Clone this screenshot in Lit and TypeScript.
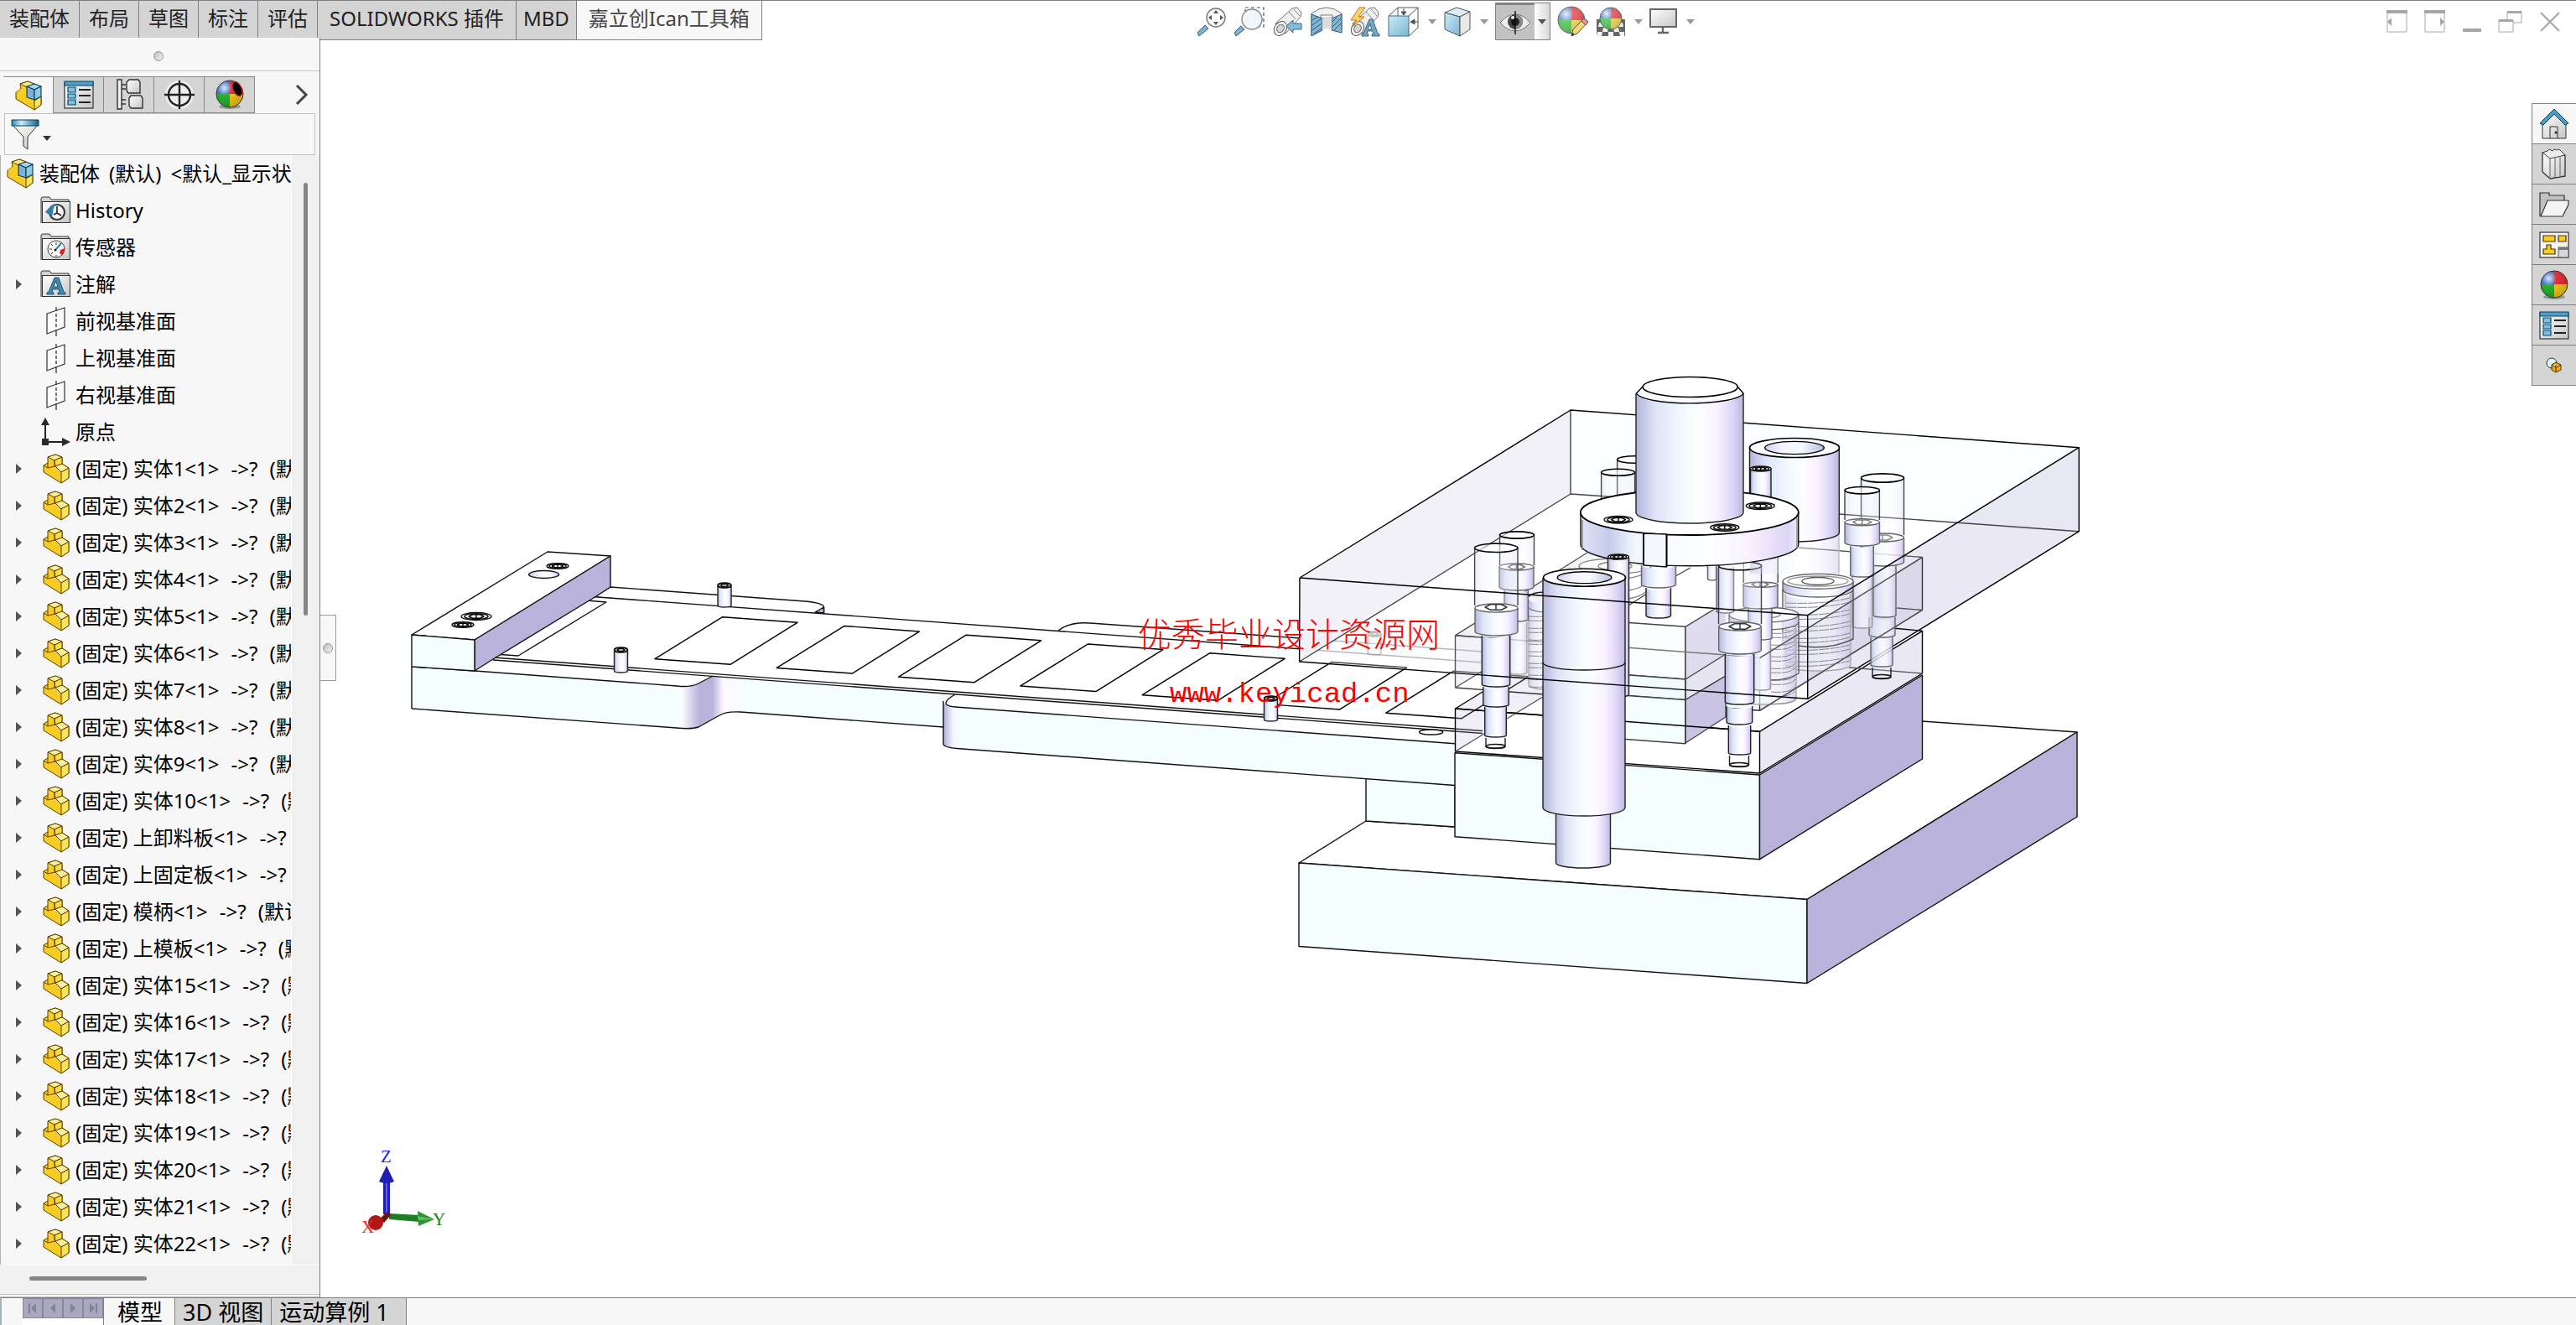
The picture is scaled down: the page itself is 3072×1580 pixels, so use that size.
import { LitElement, html, svg, css, nothing } from "lit";
import { customElement, property, state } from "lit/decorators.js";
import { classMap } from "lit/directives/class-map.js";

const FONT = css`"Noto Sans", "Noto Sans CJK SC", sans-serif`;

/* ---------- icons ---------- */

const pic = (w: number, h: number, body: unknown) =>
  html`<svg width=${w} height=${h} viewBox="0 0 ${w} ${h}" fill="none" aria-hidden="true">${body}</svg>`;

const assemblyIcon = pic(32, 36, svg`
  <g stroke="#5a4300" stroke-width="1" stroke-linejoin="round">
    <path d="M1 14 7 10 6 4 15 1 23 4 23 24 31 19 31 29 23 35 1 22z" fill="#f8cc22"/>
    <path d="M6 4 15 1 23 4 14 8z" fill="#fbe98a"/>
    <path d="M23 24 31 19 31 29 23 35z" fill="#fbe45c"/>
    <path d="M1 14 7 10 14 13 14 19z" fill="#f8cc22" stroke="none"/>
  </g>
  <g stroke="#0f4463" stroke-width="1.2" stroke-linejoin="round">
    <path d="M14 7 23 4 31 7 23 11z" fill="#a9d5ea"/>
    <path d="M14 7 23 11 23 23 14 20z" fill="#7db2d3"/>
    <path d="M23 11 31 7 31 19 23 23z" fill="#92c9e3"/>
  </g>`);

const partIcon = pic(32, 36, svg`
  <g stroke="#5a4300" stroke-width="1" stroke-linejoin="round">
    <path d="M1 14 6 11 6 4 15 1 23 4 23 12 31 17 31 29 22 35 1 22z" fill="#f8cc22"/>
    <path d="M6 4 15 1 23 4 14 8z" fill="#fbee9c"/>
    <path d="M14 8 23 4 23 12 15 15z" fill="#f9dc4e"/>
    <path d="M15 15 23 12 31 17 22 22z" fill="#fbee9c"/>
    <path d="M22 22 31 17 31 29 22 35z" fill="#fbe45c"/>
    <path d="M6 11 6 17 1 14M6 17 15 15M14 8 14 15"/>
  </g>`);

const folder = (body: unknown) => pic(37, 34, svg`
  <path d="M1 32V3Q1 1 3 1H11L13 4H34V8" fill="#d3d3d3" stroke="#333"/>
  <rect x="2.500" y="6.500" width="33" height="25" fill="url(#g-grey)" stroke="#333"/>
  ${body}`);

const historyIcon = folder(svg`
  <circle cx="20" cy="19" r="9" stroke="#3b3b3b" stroke-width="2.200" fill="#f4f4f4"/>
  <path d="M20 12V20L25 23M20 20 16 22" stroke="#222" stroke-width="1.600"/>
  <path d="M6 19 12 12Q15 9 20 9 15 12 15 20L14 24z" fill="#2f7ea8"/>`);
const sensorIcon = folder(svg`
  <circle cx="19" cy="19" r="10" fill="#f8f8f8" stroke="#444" stroke-width="1"/>
  <path d="M19 19 25 12" stroke="#2c7ba3" stroke-width="2"/>
  <path d="M24 20 29 18Q29 23 26 26L23 24z" fill="#d22"/>
  <path d="M11 19h3M13 13l2 2M19 11v3M13 25l2-2M19 28v-2" stroke="#333"/>
  <circle cx="18" cy="20" r="1.500" fill="#113"/>`);
const noteIcon = folder(svg`
  <path d="M8 29V27L10 26 17 9H22L28 26 30 27V29H21V27L23 26 22 23H15L14 26 16 27V29zM16 20H21L18.500 13z" fill="#3f88b0" stroke="#173d55" stroke-width=".8" fill-rule="evenodd"/>`);
const planeIcon = pic(37, 36, svg`
  <path d="M8 9 29 2V25L8 33z" stroke="#333" stroke-width="1.200" fill="#fbfbfb"/>
  <path d="M19 1V6M19 9v4M19 15v4M19 21v4M19 28V36" stroke="#222" stroke-width="1.200"/>`);
const originIcon = pic(37, 36, svg`
  <path d="M6 8V30H28" stroke="#222" stroke-width="2"/>
  <path d="M1 10 6 1 11 10zM26 25 36 30 26 35zM2 26h8v8H2z" fill="#2a2a2a"/>`);

const propsIcon = pic(36, 36, svg`
  <rect x="1" y="3" width="34" height="31" fill="url(#g-grey)" stroke="#333" stroke-width="1.200"/>
  <rect x="1" y="2" width="34" height="5" fill="#4fa0c8" stroke="#0d3e5c"/>
  <g fill="#7cc0e2" stroke="#0d4a6b" stroke-width="1.200"><path d="M5 9h9v6H5zM5 17h9v5H5zM5 24h9v6H5z"/></g>
  <path d="M18 12h14M18 19h14M18 27h14" stroke="#222" stroke-width="2"/>`);
const configIcon = pic(36, 38, svg`
  <path d="M4 1h5v35H4z" fill="#eee" stroke="#333" stroke-width="1.400"/>
  <path d="M9 7h5M9 12h5M9 25h5M9 30h5" stroke="#333" stroke-width="1.400"/>
  <path d="M15 4 18 1H29L31 4V17H17L15 14z" fill="url(#g-grey)" stroke="#333" stroke-width="1.400"/>
  <path d="M18 23 20 20H32L34 23V35H20L18 32z" fill="url(#g-grey)" stroke="#333" stroke-width="1.400"/>`);
const targetIcon = pic(38, 38, svg`
  <circle cx="19" cy="19" r="17" fill="#fff" opacity=".6"/>
  <circle cx="19" cy="19" r="13" stroke="#222" stroke-width="2.400"/>
  <path d="M19 2V36M1 19H37" stroke="#222" stroke-width="2.400"/>`);

const ball = (cx: number, cy: number, r: number) => svg`
  <ellipse cx=${cx} cy=${cy + r - 1} rx=${r * 0.8} ry="3" fill="#000" opacity=".3"/>
  <path d="M${cx} ${cy}V${cy - r}A${r} ${r} 0 0 0 ${cx - r} ${cy}z" fill="#2b62c4"/>
  <path d="M${cx} ${cy}V${cy - r}A${r} ${r} 0 0 1 ${cx + r} ${cy}z" fill="#d81f28"/>
  <path d="M${cx} ${cy}H${cx - r}A${r} ${r} 0 0 0 ${cx} ${cy + r}z" fill="#12a51c"/>
  <path d="M${cx} ${cy}H${cx + r}A${r} ${r} 0 0 1 ${cx} ${cy + r}z" fill="#e6bc0a"/>
  <circle cx=${cx} cy=${cy} r=${r} fill="url(#g-shine)" stroke="#333" stroke-width="1"/>`;
const ballIcon = pic(36, 38, ball(18, 18, 16));
const ballHoleIcon = pic(36, 38, svg`${ball(18, 18, 16)}
  <ellipse cx="27" cy="12" rx="5" ry="9" transform="rotate(-24 27 12)" fill="#000" stroke="#d81f28"/>`);
const filterIcon = pic(34, 38, svg`
  <path d="M2 8H32L20 22V37L15 33V22z" fill="url(#g-grey)" stroke="#333" stroke-linejoin="round"/>
  <path d="M1 2H33V9H1z" fill="url(#g-teal)" stroke="#0d3e5c"/>`);

const fitIcon = pic(36, 36, svg`
  <path d="M3 35 1 31 10 22 14 26z" fill="#79b4d1" stroke="#3a5f73"/>
  <circle cx="23" cy="13" r="11" fill="#f7fbfd" stroke="#777" stroke-width="1.400"/>
  <path d="M23 4 26 8H20zM23 22 20 18H26zM14 13 18 10V16zM32 13 28 16V10z" fill="#555"/>`);
const areaIcon = pic(38, 36, svg`
  <path d="M14 1H36V24H14z" stroke="#555" stroke-width="1.200" stroke-dasharray="4 3"/>
  <path d="M3 35 1 31 9 23 13 27z" fill="#79b4d1" stroke="#3a5f73"/>
  <circle cx="22" cy="15" r="12" fill="#eef7fc" stroke="#888" stroke-width="1.400"/>`);
const scope = svg`<path d="M4 20 24 2 30 1 35 7 34 12 16 32z" fill="#efefef" stroke="#777"/>
  <path d="M20 6 28 15M26 3 33 11" stroke="#888"/>
  <ellipse cx="10" cy="26" rx="7" ry="9" transform="rotate(35 10 26)" fill="#fafafa" stroke="#555"/>
  <ellipse cx="10" cy="26" rx="4" ry="5" transform="rotate(35 10 26)" fill="#d5d5d5" stroke="#555"/>`;
const prevIcon = pic(38, 36, svg`${scope}<path d="M17 23 25 16V20H35V27H25V31z" fill="#85bdd9" stroke="#33698a"/>`);
const sectionIcon = pic(38, 36, svg`
  <path d="M1 8Q19-6 37 8V28L26 24V10H12V26L1 34z" fill="#f2f2f2" stroke="#777"/>
  <path d="M1 9 14 14V28L1 35zM37 9 25 14V28L37 31z" fill="#7fb7d4" stroke="#33566b"/>
  <path d="M14 12H25V28Q19 24 14 28z" fill="#dcdcdc"/>
  <path d="M2 16 9 12M2 22 13 14M2 28 13 20M4 32 13 26M26 18 31 13M26 24 36 14M28 28 36 20" stroke="#33566b"/>`);
const annotViewIcon = pic(38, 36, svg`${scope}
  <path d="M12 1 2 16H9L4 24 18 12H11L19 1z" fill="#fbd766" stroke="#d1672a"/>
  <path d="M15 35V33L17 32 24 15H28L34 32 36 33V35H27V33L29 32 28 29H22L21 32 23 33V35zM22 27H27L24.500 20z" fill="#6fa9c9" stroke="#234a63" stroke-width=".8" fill-rule="evenodd"/>`);
const orientIcon = pic(38, 36, svg`
  <path d="M1 11 12 1H36V25L25 35M25 11 36 1M12 1V11" stroke="#555" fill="#fff"/>
  <path d="M1 11H25V35H1z" fill="url(#g-sky)" stroke="#3b6f8b"/>
  <path d="M19 2V7M16 6 19 10 22 6zM36 18H31M32 15 27 18 32 21z" stroke="#555" fill="#555"/>`);
const cubeIcon = pic(34, 36, svg`
  <path d="M2 7 16 1 32 6 20 12z" fill="#dbeef7" stroke="#555"/>
  <path d="M2 7 20 12V35L2 27z" fill="url(#g-sky)" stroke="#555"/>
  <path d="M20 12 32 6V27L20 35z" fill="#e8e8e8" stroke="#555"/>`);
const eyeIcon = pic(40, 36, svg`
  <path d="M2 18Q20-2 38 18 20 38 2 18z" fill="#ececec" stroke="#777"/>
  <circle cx="20" cy="17" r="9" fill="#444"/><circle cx="20" cy="17" r="5" fill="#111"/>
  <path d="M20 8A9 9 0 0 1 20 26z" fill="#8b8b8b"/><path d="M20 12A5 5 0 0 1 20 22z" fill="#222"/><circle cx="17" cy="12" r="2" fill="#eee"/>
  <path d="M20 4V32" stroke="#111" stroke-width="1.400"/>`);
const softBall = (cx: number, cy: number, r: number) => svg`
  <path d="M${cx} ${cy}V${cy - r}A${r} ${r} 0 0 0 ${cx - r} ${cy}z" fill="#6a90d6"/>
  <path d="M${cx} ${cy}V${cy - r}A${r} ${r} 0 0 1 ${cx + r} ${cy}z" fill="#e5565c"/>
  <path d="M${cx} ${cy}H${cx - r}A${r} ${r} 0 0 0 ${cx} ${cy + r}z" fill="#55c95c"/>
  <path d="M${cx} ${cy}H${cx + r}A${r} ${r} 0 0 1 ${cx} ${cy + r}z" fill="#f0d75e"/>
  <circle cx=${cx} cy=${cy} r=${r} fill="url(#g-shine)" stroke="#666"/>`;
const paintIcon = pic(38, 38, svg`${softBall(17, 17, 16)}
  <path d="M17 36 19 28 32 15 37 19 24 33z" fill="#f3d673" stroke="#555"/>
  <path d="M29 18 32 15 37 19 34 23z" fill="#e8939b" stroke="#555"/><path d="M17 36 18 32 21 34z" fill="#333"/>`);
const sceneIcon = pic(36, 38, svg`
  <path d="M1 16H35V36H1z" fill="#666"/>
  <path d="M4 20h6v5H3zM26 20h6l1 5h-6zM9 26h6l-1 5H8zM21 26h6l1 5h-6zM2 31h6l-1 5H1zM15 31h6v5h-6zM28 31h6v5h-5z" fill="#f4f4f4"/>
  ${softBall(18, 15, 13)}`);
const monitorIcon = pic(34, 32, svg`
  <rect x="1" y="1" width="31" height="21" fill="url(#g-grey)" stroke="#666" stroke-width="2"/>
  <path d="M16 22V28M10 29H23" stroke="#666" stroke-width="2.400"/>`);

const homeIcon = pic(36, 38, svg`
  <path d="M4 17 18 4 32 17V36H4z" fill="url(#g-grey)" stroke="#333"/>
  <path d="M1 18 18 1 35 18 31 20 18 7 5 20z" fill="#4b9dc6" stroke="#0d3e5c" stroke-linejoin="round"/>
  <path d="M13 36V22H22V36" stroke="#333"/><circle cx="20" cy="29" r="1.500" fill="#222"/>`);
const booksIcon = pic(32, 38, svg`
  <path d="M2 5 11 9 29 8V33L11 36 2 28z" fill="url(#g-grey)" stroke="#333" stroke-linejoin="round" stroke-width="1.300"/>
  <path d="M2 5 8 3 10 1 14 3 16 1 20 2 22 1 29 8 11 12 2 5z" fill="#ececec" stroke="#444"/>
  <path d="M11 12V36M17 11V35M23 9V34" stroke="#777" stroke-width="1.200"/>`);
const openFolderIcon = pic(38, 32, svg`
  <path d="M2 30V2H13V5H31V12" fill="#c2c2c2" stroke="#333" stroke-width="1.200"/>
  <path d="M3 30 11 11H36V16L29 30z" fill="#f4f4f4" stroke="#333" stroke-width="1.200"/>`);
const paletteIcon = pic(36, 34, svg`
  <rect x="1" y="2" width="34" height="30" fill="#f5f5f5" stroke="#333" stroke-width="1.200"/>
  <path d="M5 6H19V13H5zM23 6H32V13H23zM5 22H9V17H14V22H19V28H5z" fill="#fbcb25" stroke="#4a3500" stroke-width="1.200"/>
  <rect x="23" y="20" width="12" height="12" fill="#d8d8d8" stroke="#555"/><path d="M23 20h12v3H23z" fill="#777"/>`);
const forumIcon = pic(20, 20, svg`
  <circle cx="7" cy="7" r="6" fill="#d8f7fa" stroke="#333"/>
  <path d="M7 9 12 6 18 9V15L12 18 7 15zM7 9 12 12 18 9M12 12V18" fill="#f3a712" stroke="#4a3000"/>`);

const winIcons: [string, unknown][] = [
  ["向左停靠", pic(26, 28, svg`<path d="M1 2H24V27H1z" stroke="#a6a6a6"/><path d="M0 1H25V5H0z" fill="#a6a6a6"/><path d="M1 15 6 10V20z" fill="#a6a6a6"/>`)],
  ["向右停靠", pic(26, 28, svg`<path d="M1 2H24V27H1z" stroke="#a6a6a6"/><path d="M0 1H25V5H0z" fill="#a6a6a6"/><path d="M24 15 19 10V20z" fill="#a6a6a6"/>`)],
  ["最小化", pic(24, 28, svg`<path d="M1 23H23V27H1z" fill="#a6a6a6"/>`)],
  ["还原", pic(30, 28, svg`<path d="M11 3H28V16H11z" stroke="#a6a6a6"/><path d="M11 2H28V5H11z" fill="#a6a6a6"/><path d="M1 13H18V27H1z" fill="#fff" stroke="#a6a6a6"/><path d="M1 12H18V15H1z" fill="#a6a6a6"/>`)],
  ["关闭", pic(26, 28, svg`<path d="M2 4 24 26M24 4 2 26" stroke="#a6a6a6" stroke-width="2"/>`)],
];

const iconDefs = html`<svg class="defs" width="0" height="0" aria-hidden="true">
  <defs>
    <linearGradient id="g-grey" x2="1" y2="1"><stop stop-color="#fff"/><stop offset="1" stop-color="#c6c6c6"/></linearGradient>
    <linearGradient id="g-teal"><stop stop-color="#2a84b0"/><stop offset=".35" stop-color="#c9edfa"/><stop offset="1" stop-color="#12608a"/></linearGradient>
    <linearGradient id="g-sky" x2="1" y2="1"><stop stop-color="#c8ecf8"/><stop offset="1" stop-color="#7db5d0"/></linearGradient>
    <radialGradient id="g-shine" cx=".3" cy=".28" r=".8"><stop stop-color="#fff" stop-opacity=".85"/><stop offset=".35" stop-color="#fff" stop-opacity=".1"/><stop offset="1" stop-color="#000" stop-opacity=".15"/></radialGradient>
  </defs>
</svg>`;

/* ---------- model view ---------- */

type Pt = [number, number];
const poly = (pts: Pt[], fill: string, stroke = "none", opacity = 1) =>
  svg`<polygon points=${pts.map((p) => p.join(",")).join(" ")} fill=${fill} stroke=${stroke} fill-opacity=${opacity}/>`;

interface CylOpts { fill?: string; top?: boolean; stroke?: string; alpha?: number; bottom?: boolean }
const cyl = (x1: number, x2: number, y1: number, y2: number, ry: number, o: CylOpts = {}) => {
  const rx = (x2 - x1) / 2;
  const s = o.stroke ?? "#222";
  return svg`<g stroke=${s}>
    <path d="M${x1} ${y1}V${y2}A${rx} ${ry} 0 0 0 ${x2} ${y2}V${y1}A${rx} ${ry} 0 0 ${o.top ? 0 : 1} ${x1} ${y1}" fill=${o.fill ?? "url(#metal)"} fill-opacity=${o.alpha ?? 1} stroke="none"/>
    <path d="M${x1} ${y1}V${y2}M${x2} ${y1}V${y2}"/>
    ${o.bottom === false ? nothing : svg`<path d="M${x1} ${y2}A${rx} ${ry} 0 0 0 ${x2} ${y2}"/>`}
    ${o.top ? svg`<ellipse cx=${x1 + rx} cy=${y1} rx=${rx} ry=${ry} fill="#fff" fill-opacity=${o.alpha ?? 1}/>` : nothing}
  </g>`;
};
/** Clear clearance hole above a screw. */
const bore = (cx: number, rx: number, y1: number, y2: number) => svg`
  <path d="M${cx - rx} ${y1}V${y2}H${cx + rx}V${y1}" fill="url(#metal)" fill-opacity=".22" stroke="none"/>
  <path d="M${cx - rx} ${y1}V${y2}M${cx + rx} ${y2}V${y1}" stroke="#444"/>
  <ellipse cx=${cx} cy=${y1} rx=${rx} ry=${rx / 5} fill="#fff" fill-opacity=".5" stroke="#000" stroke-width="1.600"/>`;
const hex = (cx: number, cy: number, rx: number, s = "#333") => {
  const r = rx / 4;
  return svg`<path d="M${cx - rx} ${cy}L${cx - rx / 2} ${cy - r}H${cx + rx / 2}L${cx + rx} ${cy}L${cx + rx / 2} ${cy + r}H${cx - rx / 2}zM${cx} ${cy - r}V${cy + r}" stroke=${s} fill="#fff"/>`;
};
const socket = (cx: number, cy: number, rx: number) => svg`
  <ellipse cx=${cx} cy=${cy} rx=${rx} ry=${rx / 4} fill="#fff"/>
  <ellipse cx=${cx} cy=${cy} rx=${rx * 0.78} ry=${rx / 5.5}/>${hex(cx, cy, rx * 0.5, "#000")}`;
const pin = (cx: number, y1: number, y2: number) => svg`
  ${cyl(cx - 8, cx + 8, y1, y2, 2)}<ellipse cx=${cx} cy=${y1} rx="8" ry="3" fill="#999" stroke="#000"/><ellipse cx=${cx} cy=${y1} rx="4" ry="1.500" stroke="#000" fill="#fff"/>`;
const coils = (x1: number, x2: number, y1: number, y2: number) => {
  const out = [];
  for (let y = y1, i = 0; y < y2; y += i % 2 ? 9 : 5, i++)
    out.push(svg`<path d="M${x1} ${y + 3}Q${(x1 + x2) / 2 + 8} ${y + 5} ${x2} ${y - 3}"/>`);
  return svg`<g stroke="#888" stroke-width="1" stroke-dasharray="12 1">${out}</g>`;
};

@customElement("die-scene")
export class DieScene extends LitElement {
  static styles = css`
    :host { display: block; width: 100%; height: 100%; }
    .scene { display: block; width: 100%; height: 100%; }
    .mark-cn { font: 40px "Noto Sans CJK SC", sans-serif; font-weight: 300; fill: #f00; stroke: none; }
    .mark-url { font: 34px "Liberation Mono", monospace; fill: #f00; stroke: none; }
    .axis { font: 21px "Liberation Serif", serif; stroke: none; }
  `;

  private strip() {
    const windows = [0, 1, 2, 3, 4, 5, 6].map((i) => {
      const dx = i * 145.3, dy = i * 10.75;
      return poly([[861.7 + dx, 735.7 + dy], [951 + dx, 742.3 + dy], [871 + dx, 792.3 + dy], [781 + dx, 785.7 + dy]], "#fff", "#000");
    });
    return svg`
      <path d="M728 700 960 717Q982 719 982.500 724V733L709 712z" fill="#fff"/>
      <path d="M982.500 724V731L972 730z" fill="#b9b3dc"/>
      <path d="M1262 752Q1276 741 1300 743L1768 777V791z" fill="#fff" stroke="none"/>
      <path d="M1262 752Q1276 741 1300 743L1550 761"/><path d="M1550 761 1768 777" stroke="#999"/>
      <path d="M491 795 807 818Q824 820 833 815L850 806 1125 826V867L883 849Q866 848 858 853L833 867Q824 870 807 868L491 845z" fill="#f5feff" stroke="none"/>
      <path d="M812 819Q826 819 833 815L850 806 890 808V849Q868 847 858 853L833 867Q826 869 812 868z" fill="url(#bend)" stroke="none"/>
      <path d="M1125 867 883 849Q866 848 858 853L833 867Q824 870 807 868L491 845"/>
      <path d="M1125 838Q1126 832 1139 828L1735 872V936.500L1141 892.500Q1125 891 1125 887z" fill="#f5feff" stroke="none"/>
      <path d="M1125 838Q1130 843 1145 843V892Q1125 891 1125 887z" fill="url(#edge)" stroke="none"/>
      <path d="M1139 828Q1117 841 1139 843L1768 888V874z" fill="#fff" stroke="none"/>
      <path d="M1139 828Q1117 841 1139 843L1735 886.700M1125 836V887Q1125 891 1141 892.500L1735 936.500"/>
      <path d="M491 795 566 800 588 786 850 806 833 815Q824 820 807 818L566 800z" fill="#fff" stroke="none"/>
      <path d="M566 800 807 818Q824 820 833 815L850 806M491 795 566 800"/>
      <path d="M709 711.700 1780 791 1780 873 588 784z" fill="#fff" stroke="none"/>
      <path d="M709 711.700 1560 774.500M588 784 1768 871.500"/><path d="M588 787 1768 874.500"/><path d="M1560 774.500 1768 790" stroke="#999"/>
      ${windows}
      <path d="M699 716 723 718 618 782 590 780" fill="#fff"/>
      <polygon points="491,757 653,658 728,663 566,763" fill="#fff"/>
      <polygon points="566,763 728,663 728,700 711,711 588,786 566,800" fill="#b9b3dc"/>
      <polygon points="491,757 566,763 566,800 491,795" fill="#f5feff"/>
      <path d="M491 795V845" />
      ${socket(665, 675, 13)}
      <ellipse cx="648.600" cy="685" rx="18" ry="4.500" fill="url(#metal)"/>
      ${socket(568, 735, 18)}${socket(552, 745, 13)}
      ${pin(864, 698, 722)}${pin(740.5, 775, 800)}${pin(1515.5, 833, 858)}
      <g opacity=".4">${pin(1639, 756, 779)}</g>
      <ellipse cx="1706.600" cy="873" rx="14" ry="3" fill="#fff"/>`;
  }

  private base() {
    return svg`
      <polygon points="1549,1029 1629,979 1800,860 2292,860 2477,873 2155,1072.500" fill="#fff" stroke="none"/>
      <path d="M2292 860 2477 873 2155 1072.500 1549 1029 1629 979 1735 986"/>
      <polygon points="1549,1029 2155,1072.500 2155,1172.500 1549,1128.500" fill="#f5feff"/>
      <polygon points="2155,1072.500 2477,873 2477,974 2155,1172.500" fill="#b9b3dc"/>
      <polygon points="1629,928 1735,936 1735,986 1629,979" fill="#f5feff"/>`;
  }

  private dieBlock() {
    return svg`
      <polygon points="1735,897.700 2098.500,924 2098.500,1024.700 1735,997.700" fill="#f5feff"/>
      <polygon points="2098.500,924 2292.500,805 2292.500,905 2098.500,1024.700" fill="#b9b3dc"/>
      <polygon points="1735,895.700 1768,876 1938,840 2230,796 2292.500,803 2098.500,922" fill="#fff" stroke="none"/>`;
  }

  private plates() {
    return svg`
      ${poly([[1735.5, 845], [1768, 825], [1840, 781], [1840, 831], [1735.5, 895.7]], "#b9b3dc", "none", 0.22)}
      ${poly([[2098.5, 872.3], [2292.5, 752.3], [2292.5, 803], [2098.5, 922]], "#b9b3dc", "none", 0.3)}
      ${poly([[1735.5, 757.7], [1900, 656], [1900, 718], [1735.5, 820]], "#c4c0dc", "none", 0.2)}
      ${poly([[2098.5, 784.7], [2292.5, 664.5], [2292.5, 727.5], [2098.5, 847]], "#b9b3dc", "none", 0.3)}
      <path d="M1735.500 845V896L2098.500 922V872.300zM2098.500 872.300 2292.500 752.300V803L2098.500 922M2257 749 2292.500 752.300M1735.500 845 1768 825" stroke="#000"/>
      <path d="M1735.500 820 2098.500 847.300 2292.500 727.500V664.500L2098.500 784.700V847" stroke="#333"/>
      <path d="M1735.500 820V757.700L2098.500 784.700M2145 653 2292.500 664.500M1735.500 757.700 1893 659M2262 725 2292.500 727.500M2205 796 2292.500 803M1735.500 820 1768 800M1735.500 896 1770 875M1797 857 1840 831" stroke="#555"/>`;
  }

  private punch() {
    return svg`<g stroke="#444">
      <polygon points="1850,736 2010,747.300 2046.700,725 2016,677 1942,722" fill="#fff" stroke="none"/>
      <path d="M1942 722 1964 708M1998 687 2016 677" />
      <polygon points="1850,736 2010,747.300 2010,810 1850,798" fill="#fafeff"/>
      <polygon points="1850,798 2010,810 2010,834.500 1850,823" fill="#f1fbfd"/>
      <polygon points="1850,823 2010,834.500 2010,886.700 1850,875" fill="#f5feff"/>
      <polygon points="2010,747.300 2046.700,725 2058,724 2058,780 2010,810" fill="#dfdcef" stroke="none"/>
      <polygon points="2010,810 2058,780 2058,806 2010,834.500" fill="#e6e3f3"/>
      <polygon points="2010,834.500 2058,806 2058,855 2010,886" fill="#c9c4e3"/>
      <path d="M2010 747.300 2046.700 725M2010 747V887"/>
    </g>
    <path d="M1938 772 2058 781" stroke="#777"/>`;
  }

  private fasteners() {
    const soft = "#666";
    return svg`
      <g>${bore(2245, 25.5, 570, 638)}
        ${cyl(2219.5, 2270.5, 641, 670, 5, { top: true, stroke: soft, alpha: 0.8 })}${hex(2245, 641, 12, "#888")}
        ${cyl(2234, 2261, 674, 734, 2, { alpha: 0.6, stroke: soft })}${cyl(2229, 2260, 736, 757, 3, { alpha: 0.6, stroke: soft })}
        ${cyl(2231, 2257, 760, 793, 2, { alpha: 0.8, stroke: soft })}${cyl(2233, 2255, 796, 807, 2, { alpha: 0.2 })}<ellipse cx="2244" cy="807" rx="11" ry="2.500"/></g>
      <g>${bore(2220.7, 20.7, 584.7, 620)}
        ${cyl(2200, 2241.5, 622.7, 647, 4, { top: true, stroke: soft })}${hex(2220.7, 622.7, 11, "#777")}
        ${cyl(2206.7, 2234.3, 651, 686, 2, { stroke: soft })}${cyl(2209, 2232.7, 688, 747, 2, { alpha: 0.6, stroke: "#999" })}</g>
      <g>${cyl(2126, 2210, 693.3, 703, 9, { top: true, stroke: soft })}
        <ellipse cx="2168" cy="693" rx="36" ry="6" stroke="#999"/>
        <ellipse cx="2168" cy="693" rx="19" ry="4.500" stroke="#555"/>
        ${cyl(2129, 2207, 708, 793, 7, { alpha: 0.5, stroke: "#aaa" })}${coils(2130, 2206, 716, 795)}
        <path d="M2126 703V765M2210 703V762Q2180 776 2144 770" stroke="#555"/></g>
      <g>${cyl(2062, 2145, 733, 742, 9, { top: true, stroke: soft, alpha: 0.8 })}
        <ellipse cx="2104" cy="733" rx="19" ry="4" stroke="#888"/>
        ${cyl(2066, 2142, 748, 834, 6, { alpha: 0.6, stroke: "#aaa" })}${coils(2112, 2141, 752, 838)}
        <path d="M2145 742V803Q2132 811 2112 811" stroke="#555"/></g>
      ${cyl(2047, 2067.5, 676, 729, 2, { stroke: soft })}
      <g>${bore(2099.7, 20.5, 659.3, 695)}
        ${cyl(2079, 2120, 697.3, 723, 3, { top: true, stroke: soft })}${hex(2099, 697, 10, "#777")}
        ${cyl(2085, 2113, 726, 761, 2, { stroke: soft })}${cyl(2090, 2111.5, 763, 821, 2, { stroke: "#999", alpha: 0.8 })}</g>
      <g>${bore(2075, 25.5, 674.7, 744)}
        ${cyl(2049.7, 2100.3, 747, 775, 5, { top: true, stroke: soft })}${hex(2075, 747, 13)}
        ${cyl(2057.3, 2091.7, 780, 837, 3)}${cyl(2059, 2089.7, 842, 861, 3)}
        ${cyl(2061.3, 2087.7, 865, 898, 2)}${cyl(2062.5, 2085.5, 901, 912, 2, { alpha: 0.2 })}<ellipse cx="2074" cy="912" rx="11.500" ry="2.500"/></g>
      <g>${cyl(1822, 1860, 712, 722, 8, { stroke: soft })}${cyl(1823, 1860, 724, 816, 6, { alpha: 0.5, stroke: "#aaa" })}${coils(1823, 1860, 732, 818)}
        <path d="M1822 712Q1828 706 1842 706" /></g>
      <g>${bore(1809, 20.5, 638, 674)}
        ${cyl(1788, 1829, 676, 700, 4, { top: true, stroke: soft })}${hex(1808.5, 676, 10, "#777")}
        ${cyl(1794, 1822.3, 704, 739, 2, { stroke: soft })}${cyl(1799, 1821, 742, 802, 2, { stroke: "#aaa", alpha: 0.7 })}</g>
      <g>${bore(1784.3, 25.7, 653.3, 722)}
        ${cyl(1759, 1810, 725, 753, 5, { top: true, stroke: soft })}${hex(1784, 724, 13)}
        ${cyl(1767.3, 1800.7, 758, 816, 3)}${cyl(1768.7, 1799.3, 819, 840, 3)}
        ${cyl(1770.7, 1796.3, 843, 877, 2)}${cyl(1772, 1795, 880, 890, 2, { alpha: 0.2 })}<ellipse cx="1783.500" cy="890" rx="11.500" ry="2.500"/></g>
      <g stroke="#888"><ellipse cx="1926" cy="675" rx="43" ry="9" fill="#fafafa"/><ellipse cx="1926" cy="675" rx="20" ry="5"/>
        <path d="M1938 690Q1958 688 1966 680M1942 704Q1960 701 1964 694M1942 714Q1962 710 1964 703"/></g>
      ${cyl(2036.4, 2047, 672, 690, 2, { stroke: soft })}
      ${cyl(1957.5, 1998.5, 674, 697, 4, { stroke: soft })}${cyl(1963, 1992.5, 701, 734, 3)}`;
  }

  private pillarsAndShank() {
    const ring = (cx: number, cy: number, rx: number, ry: number) => svg`
      <ellipse cx=${cx} cy=${cy} rx=${rx} ry=${ry} fill="#fff" stroke="#000" stroke-width="1.600"/>
      <ellipse cx=${cx} cy=${cy} rx=${rx * 0.66} ry=${ry * 0.66} fill="url(#bore)" stroke="#000"/>`;
    return svg`
      ${bore(1949.6, 21, 548, 600)}${bore(1929.6, 20, 563.3, 600)}
      <path d="M2087 634V684H2193V634" fill="url(#metal)" fill-opacity=".4" stroke="none"/><path d="M2193 634V684" stroke="#bbb"/>
      ${cyl(2086.5, 2193.3, 534, 635, 11)}${ring(2140, 534, 53.5, 11.5)}
      ${cyl(2087.5, 2112, 559, 600, 3)}${socket(2099.7, 559, 12.5)}
      <path d="M1885 611V650A130 26 0 0 0 2144.700 650V611z" fill="url(#flange)"/>
      <ellipse cx="2014.800" cy="611" rx="130" ry="27" fill="#fff" stroke="#000" stroke-width="1.800"/>
      <path d="M1887 620V656M2143 618V654" stroke="#888"/>
      <path d="M1960 636V674L1987.500 676V637z" fill="#f4f8fd"/>
      <path d="M1960 636V674M1987.500 637V676" stroke="#000" stroke-width="1.800"/>
      ${socket(1930, 619.7, 17)}${socket(2056.8, 629, 17)}${socket(2099.3, 603.3, 17)}
      ${cyl(1951, 2079, 469, 611, 13)}
      <path d="M1951.500 469 1959 461H2072L2079 469A64 13 0 0 1 1951.500 469z" fill="#fafbff" stroke="#000"/>
      <ellipse cx="2015.700" cy="461.500" rx="56.500" ry="12" fill="#fff" stroke="#000" stroke-width="1.600"/>
      ${cyl(1917.5, 1942.5, 665, 828, 3)}${socket(1930, 664, 12.5)}
      ${cyl(1855.5, 1920.5, 965, 1029, 6)}
      ${cyl(1840, 1938, 689, 963, 10)}
      <path d="M1840 790A49 9 0 0 0 1938 790"/>
      ${ring(1889.5, 688.7, 49, 10.5)}`;
  }

  private triad() {
    return svg`
      <path d="M464 1447 500 1449V1457L464 1454z" fill="#1d7d22" stroke="none"/>
      <path d="M498 1444 518 1454 499 1462z" fill="#2c9434" stroke="none"/><path d="M498 1450 518 1454 499 1455z" fill="#5fbf66" stroke="none"/>
      <path d="M457 1409H465V1448H457z" fill="#1c1cc8" stroke="none"/><path d="M460 1409H462V1448H460z" fill="#5c5cf5" stroke="none"/>
      <path d="M452 1409 461 1390 470 1409Q461 1413 452 1409z" fill="#1f1fb4" stroke="none"/>
      <path d="M452 1454 462 1445 466 1449 458 1458z" fill="#6c1414" stroke="none"/>
      <ellipse cx="448" cy="1458" rx="9" ry="9" fill="#b01818" stroke="none"/>
      <text class="axis" x="454" y="1386" fill="#2222ff">Z</text>
      <text class="axis" x="516" y="1461" fill="#118811">Y</text>
      <text class="axis" x="431" y="1470" fill="#ff2020">X</text>`;
  }

  render() {
    return html`<svg class="scene" viewBox="382 45 2690 1502" preserveAspectRatio="xMidYMid meet" fill="none"
        stroke="#111" stroke-width="1.400" stroke-linejoin="round" role="img" aria-label="装配体">
      <defs>
        <linearGradient id="metal"><stop stop-color="#b3b4da"/><stop offset=".18" stop-color="#dfe3f6"/><stop offset=".45" stop-color="#f3fbff"/><stop offset=".6" stop-color="#fdfdff"/><stop offset=".76" stop-color="#f8f0ff"/><stop offset=".9" stop-color="#dcd6f6"/><stop offset="1" stop-color="#bdb7e0"/></linearGradient>
        <linearGradient id="flange"><stop stop-color="#dfe3f6"/><stop offset=".13" stop-color="#c6cbea"/><stop offset=".25" stop-color="#f2f7fd"/><stop offset=".6" stop-color="#fdfeff"/><stop offset=".78" stop-color="#f8f0ff"/><stop offset=".95" stop-color="#dcd6f6"/><stop offset="1" stop-color="#eeeaff"/></linearGradient>
        <linearGradient id="bore"><stop stop-color="#d3cdf2"/><stop offset=".3" stop-color="#f8f2ff"/><stop offset=".6" stop-color="#f4fcff"/><stop offset="1" stop-color="#b9bde0"/></linearGradient>
        <linearGradient id="bend"><stop stop-color="#fff"/><stop offset=".28" stop-color="#b9b3dc"/><stop offset=".48" stop-color="#b9b3dc"/><stop offset=".65" stop-color="#fdf7ff"/><stop offset="1" stop-color="#f5feff"/></linearGradient>
        <linearGradient id="edge"><stop stop-color="#b0b0d6"/><stop offset=".6" stop-color="#f6f6ff"/><stop offset="1" stop-color="#f5feff"/></linearGradient>
      </defs>
      ${this.base()}
      ${this.strip()}
      ${this.dieBlock()}
      ${poly([[1873, 489], [2479.3, 533.7], [2479.3, 633.7], [1873, 589]], "#f5feff", "none", 0.4)}
      ${poly([[1550, 689], [1873, 489], [1873, 589], [1550, 789]], "#f1f0f8", "none", 0.95)}
      ${poly([[1550, 789], [1873, 589], [2150, 610], [2155.7, 833]], "#fff", "none", 0.3)}
      ${poly([[2155.7, 733.7], [2479.3, 533.7], [2479.3, 633.7], [2155.7, 833.3]], "#b9b3dc", "none", 0.3)}
      <path d="M1549.600 789 1873 589V489M1873 589 1930 593M2193 613 2479.300 633.700" stroke="#444"/>
      <path d="M1550 689 1873 489 2479.300 533.700V633.700L2155.700 833.300" stroke="#000"/>
      ${this.plates()}
      ${this.punch()}
      <path d="M1735.500 845 2098.500 872.300" stroke="#000"/>
      ${this.fasteners()}
      <path d="M1735.500 757.700 1759 759.500M2098.500 784.700 2292.500 664.500M2098.500 847.300 2292.500 727.500" stroke="#555"/>
      ${this.pillarsAndShank()}
      <path d="M1550 689 2155.700 733.700 2479.300 533.700M1550 689 1549.600 789 2155.700 833.300V733.700" stroke="#000"/>
      <text class="mark-cn" x="1357" y="771">优秀毕业设计资源网</text>
      <text class="mark-url" x="1395" y="837">www.keyicad.cn</text>
      ${this.triad()}
    </svg>`;
  }
}

/* ---------- feature tree ---------- */

interface Node { icon: unknown; label: string[]; open?: boolean }
const part = (name: string): Node => ({ icon: partIcon, label: [`(固定) ${name}<1>`, "->?", "(默认)"], open: false });
const nodes: Node[] = [
  { icon: historyIcon, label: ["History"] },
  { icon: sensorIcon, label: ["传感器"] },
  { icon: noteIcon, label: ["注解"], open: false },
  { icon: planeIcon, label: ["前视基准面"] },
  { icon: planeIcon, label: ["上视基准面"] },
  { icon: planeIcon, label: ["右视基准面"] },
  { icon: originIcon, label: ["原点"] },
  ...Array.from({ length: 10 }, (_, i) => part(`实体${i + 1}`)),
  ...["上卸料板", "上固定板", "模柄", "上模板"].map(part),
  ...Array.from({ length: 8 }, (_, i) => part(`实体${i + 15}`)),
];

const commandTabs = ["装配体", "布局", "草图", "标注", "评估", "SOLIDWORKS 插件", "MBD", "嘉立创Ican工具箱"];
const managerTabs: [string, unknown][] = [
  ["设计树", assemblyIcon], ["属性", propsIcon], ["配置", configIcon], ["尺寸", targetIcon], ["外观", ballHoleIcon],
];
const taskTabs: [string, unknown][] = [
  ["主页", homeIcon], ["设计库", booksIcon], ["文件探索器", openFolderIcon], ["视图调色板", paletteIcon],
  ["外观", ballIcon], ["自定义属性", propsIcon], ["论坛", forumIcon],
];

@customElement("app-root")
export class AppRoot extends LitElement {
  @state() private command = 7;
  @state() private sheet = 0;
  @property({ type: Number }) manager = 0;

  static styles = css`
    :host { display: flex; flex-direction: column; height: 100vh; overflow: hidden; background: #fff; color: #000; font: 24px/32px ${FONT}; }
    * { box-sizing: border-box; }
    button { font: inherit; color: inherit; border: 0; padding: 0; margin: 0; background: none; display: flex; align-items: center; justify-content: center; flex: none; }
    svg { display: block; flex: none; }
    .defs { position: absolute; }

    .top { flex: none; height: 45px; display: grid; grid-template-columns: 376px minmax(0, 1fr) auto minmax(0, 1fr); border-top: 1px solid #808080; }
    .commands { grid-column: 1 / 3; display: flex; justify-self: start; border-bottom: 1px solid #808080; }
    .command { padding: 0 11px 4px; white-space: nowrap; background: #d4d4d4; border-right: 1px solid #808080; color: #222; }
    .command.wide { padding: 0 14px 4px; }
    .command.slim { padding: 0 8px 4px; }
    .command.on { background: #f7f7f7; color: #444; }
    .views { display: flex; align-items: center; gap: 8px; padding-top: 2px; }
    .views button { height: 38px; }
    .caret { width: 0; height: 0; border: 5px solid transparent; border-top: 6px solid #999; border-bottom: 0; }
    .drop { gap: 10px; }
    .seen { display: flex; height: 45px; border: 1px solid #808080; }
    .views .seen button { height: 43px; width: 46px; background: #c2c2c2; border-top: 2px solid #808080; }
    .views .seen .more { width: 18px; border-top: 0; background: linear-gradient(90deg, #fff, #d8d8d8); }
    .seen .caret { border-top-color: #555; }
    .window { display: flex; justify-content: flex-end; align-items: center; gap: 19px; padding: 0 18px 0 0; }

    .body { flex: 1; min-height: 0; display: flex; }
    .panel { flex: none; width: 382px; display: flex; flex-direction: column; background: #f7f7f7; border-right: 1px solid #808080; }
    .grip { height: 40px; border-bottom: 1px solid #c8c8c8; display: flex; align-items: center; justify-content: center; padding: 4px 4px 0 0; }
    .dot { width: 12px; height: 12px; border-radius: 50%; border: 1px solid #999; background: linear-gradient(135deg, #bbb, #f4f4f4); }
    .managers { margin: 6px 0 0 4px; height: 44px; display: flex; }
    .manager { width: 60px; background: #d4d4d4; border: 1px solid #888; border-left: 0; }
    .manager.on { background: #f7f7f7; border-bottom: 0; }
    .next { margin-left: auto; width: 58px; padding-left: 16px; }
    .filter { margin: 0 5px; height: 50px; border: 1px solid #c0c0c0; display: flex; align-items: center; padding-left: 7px; }
    .filter button { gap: 4px; }
    .filter .caret { border-top-color: #333; margin-top: 10px; }
    .rows { flex: 1; min-height: 0; display: flex; border-left: 1px solid #b0b0b0; }
    .tree { flex: 1; min-width: 0; margin: 0; padding: 0 0 0 7px; list-style: none; overflow: hidden; }
    .row { display: flex; align-items: center; height: 44px; white-space: nowrap; }
    .root .pieces { gap: 11px; margin-left: 7px; }
    .twist { flex: none; width: 40px; height: 44px; justify-content: flex-start; padding-left: 11px; }
    .twist-mark { width: 0; height: 0; border: 6px solid transparent; border-left: 7px solid #555; border-right: 0; }
    .glyph { flex: none; width: 37px; display: flex; justify-content: center; margin-right: 5px; }
    .pieces { flex: none; display: flex; gap: 14px; }
    .vbar { flex: none; width: 34px; background: #f0f0f0; border-left: 1px solid #fff; padding: 33px 0 0 14px; }
    .vthumb { width: 5px; height: 40%; border-radius: 3px; background: #858585; }
    .hbar { flex: none; height: 35px; background: #f0f0f0; border-top: 1px solid #fff; padding: 13px 0 0 35px; }
    .hthumb { width: 140px; height: 5px; border-radius: 3px; background: #858585; }
    .seam { flex: none; height: 4px; border: 1px solid #c0c0c0; border-width: 1px 0; }

    .view { position: relative; flex: 1; min-width: 0; }
    .split { position: absolute; left: 0; top: 688px; width: 19px; height: 79px; background: #f7f7f7; border: 1px solid #999; border-left: 0; }
    .tasks { position: absolute; right: 0; top: 78px; width: 53px; border: 1px solid #808080; border-right: 0; }
    .task { width: 100%; height: 48px; background: #d4d4d4; border-top: 1px solid #808080; }
    .task:first-child { background: #f7f7f7; border-top: 0; height: 47px; }

    .foot { flex: none; height: 33px; display: flex; background: #f7f7f7; border-top: 1px solid #808080; border-left: 2px solid #9fb9bb; font-size: 27px; line-height: 31px; }
    .steps { width: 97px; margin-left: 25px; display: flex; background: #fff; border-right: 1px solid #808080; align-items: flex-start; }
    .step { width: 24px; height: 24px; background: #a8a9be; border: 1px solid #8788a0; }
    .sheet { padding: 0 9px; background: #d4d4d4; border-right: 1px solid #808080; white-space: nowrap; }
    .sheet.on { padding: 0 14px 0 16px; background: #f7f7f7; }
    .sheet:last-child { padding-right: 20px; }
  `;

  private drop(label: string, icon: unknown) {
    return html`<button class="drop" aria-label=${label}>${icon}<span class="caret"></span></button>`;
  }

  private step(label: string, d: string) {
    return html`<button class="step" aria-label=${label}>${pic(16, 16, svg`<path d=${d} fill="#80819a"/>`)}</button>`;
  }

  private pieces(label: string[]) {
    return html`<span class="pieces">${label.map((t) => html`<span>${t}</span>`)}</span>`;
  }

  render() {
    return html`${iconDefs}
      <header class="top">
        <nav class="commands">
          ${commandTabs.map((t, i) => html`<button
            class=${classMap({ command: true, on: i === this.command, wide: t.length > 5, slim: t === "MBD" })}
            @click=${() => (this.command = i)}>${t}</button>`)}
        </nav>
        <div class="views">
          <button aria-label="整屏显示全图">${fitIcon}</button>
          <button aria-label="局部放大">${areaIcon}</button>
          <button aria-label="上一视图">${prevIcon}</button>
          <button aria-label="剖面视图">${sectionIcon}</button>
          <button aria-label="动态注解视图">${annotViewIcon}</button>
          ${this.drop("视图定向", orientIcon)}
          ${this.drop("显示样式", cubeIcon)}
          <div class="seen">
            <button aria-label="隐藏/显示项目">${eyeIcon}</button>
            <button class="more" aria-label="更多"><span class="caret"></span></button>
          </div>
          <button aria-label="编辑外观">${paintIcon}</button>
          ${this.drop("应用布景", sceneIcon)}
          ${this.drop("视图设定", monitorIcon)}
        </div>
        <div class="window">${winIcons.map(([l, i]) => html`<button aria-label=${l}>${i}</button>`)}</div>
      </header>

      <main class="body">
        <aside class="panel">
          <div class="grip"><span class="dot"></span></div>
          <div class="managers">
            ${managerTabs.map(([l, icon], i) => html`<button
              class=${classMap({ manager: true, on: i === this.manager })} aria-label=${l}
              @click=${() => (this.manager = i)}>${icon}</button>`)}
            <button class="next" aria-label="更多标签">${pic(16, 26, svg`<path d="M2 2 13 13 2 24" stroke="#444" stroke-width="3"/>`)}</button>
          </div>
          <div class="filter"><button aria-label="过滤">${filterIcon}<span class="caret"></span></button></div>
          <div class="rows">
            <ul class="tree">
              <li class="row root">${assemblyIcon}${this.pieces(["装配体", "(默认)", "<默认_显示状"])}</li>
              ${nodes.map((n) => html`<li class="row">
                ${n.open === undefined
                  ? html`<span class="twist"></span>`
                  : html`<button class="twist" aria-label="展开 ${n.label[0]}"><span class="twist-mark"></span></button>`}
                <span class="glyph">${n.icon}</span>${this.pieces(n.label)}
              </li>`)}
            </ul>
            <div class="vbar"><div class="vthumb"></div></div>
          </div>
          <div class="hbar"><div class="hthumb"></div></div>
          <div class="seam"></div>
        </aside>
        <section class="view">
          <die-scene></die-scene>
          <button class="split" aria-label="折叠面板"><span class="dot"></span></button>
          <nav class="tasks">${taskTabs.map(([l, icon]) => html`<button class="task" aria-label=${l}>${icon}</button>`)}</nav>
        </section>
      </main>

      <footer class="foot">
        <div class="steps">
          ${this.step("第一个", "M3 2H5V14H3zM12 2V14L6 8z")}
          ${this.step("上一个", "M11 2V14L5 8z")}
          ${this.step("下一个", "M5 2V14L11 8z")}
          ${this.step("最后一个", "M4 2V14L10 8zM11 2H13V14H11z")}
        </div>
        ${["模型", "3D 视图", "运动算例 1"].map((t, i) => html`<button
          class=${classMap({ sheet: true, on: i === this.sheet })} @click=${() => (this.sheet = i)}>${t}</button>`)}
      </footer>`;
  }
}
